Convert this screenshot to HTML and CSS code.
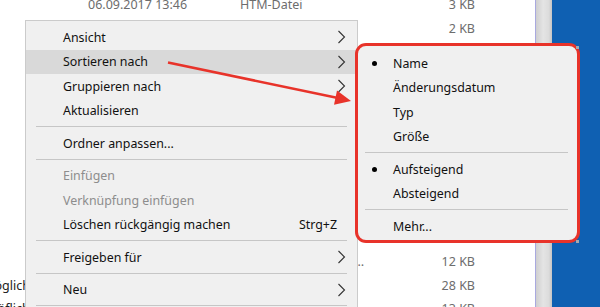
FILE: index.html
```html
<!DOCTYPE html>
<html lang="de">
<head>
  <meta charset="UTF-8">
  <title>Kontextmenü - Sortieren nach</title>
  <link rel="stylesheet" href="styles.css">
</head>
<body>
  <div class="screen">
    <!-- Dateiliste im Hintergrund -->
    <div class="files">
      <div class="file-row">
        <span class="col-name">a.htm</span>
        <span class="col-date">06.09.2017 13:46</span>
        <span class="col-type">HTM-Datei</span>
        <span class="col-size">3 KB</span>
      </div>
      <div class="file-row">
        <span class="col-name">b.htm</span>
        <span class="col-date">06.09.2017 13:46</span>
        <span class="col-type">HTM-Datei</span>
        <span class="col-size">2 KB</span>
      </div>
      <div class="file-row"><span class="col-name"></span></div>
      <div class="file-row"><span class="col-name"></span></div>
      <div class="file-row"><span class="col-name"></span></div>
      <div class="file-row"><span class="col-name"></span></div>
      <div class="file-row"><span class="col-name"></span></div>
      <div class="file-row"><span class="col-name"></span></div>
      <div class="file-row"><span class="col-name"></span></div>
      <div class="file-row"><span class="col-name"></span></div>
      <div class="file-row"><span class="col-name"></span></div>
      <div class="file-row">
        <span class="col-name">c.pdf</span>
        <span class="col-date">12.06.2017 09:12</span>
        <span class="col-type">Adobe Acrobat-Dok…</span>
        <span class="col-size">12 KB</span>
      </div>
      <div class="file-row">
        <span class="col-name dark">Zugriff möglich.txt</span>
        <span class="col-date">14.06.2017 11:30</span>
        <span class="col-type">Textdokument</span>
        <span class="col-size">28 KB</span>
      </div>
      <div class="file-row">
        <span class="col-name dark">Anfrage höflich.txt</span>
        <span class="col-date">14.06.2017 11:32</span>
        <span class="col-type">Textdokument</span>
        <span class="col-size">13 KB</span>
      </div>
    </div>
    <div class="scrollbar"></div>
    <div class="desktop"></div>
  </div>

  <!-- Kontextmenü -->
  <ul class="menu">
    <li class="item">Ansicht<svg class="chevron" viewBox="0 0 9 14"><path d="M1.5 1 L7.5 7 L1.5 13"/></svg></li>
    <li class="item active">Sortieren nach<svg class="chevron" viewBox="0 0 9 14"><path d="M1.5 1 L7.5 7 L1.5 13"/></svg></li>
    <li class="item">Gruppieren nach<svg class="chevron" viewBox="0 0 9 14"><path d="M1.5 1 L7.5 7 L1.5 13"/></svg></li>
    <li class="item">Aktualisieren</li>
    <li class="sep"></li>
    <li class="item">Ordner anpassen...</li>
    <li class="sep"></li>
    <li class="item disabled">Einfügen</li>
    <li class="item disabled">Verknüpfung einfügen</li>
    <li class="item">Löschen rückgängig machen<span class="shortcut">Strg+Z</span></li>
    <li class="sep"></li>
    <li class="item">Freigeben für<svg class="chevron" viewBox="0 0 9 14"><path d="M1.5 1 L7.5 7 L1.5 13"/></svg></li>
    <li class="sep"></li>
    <li class="item">Neu<svg class="chevron" viewBox="0 0 9 14"><path d="M1.5 1 L7.5 7 L1.5 13"/></svg></li>
    <li class="sep"></li>
  </ul>

  <!-- Untermenü (rot markiert) -->
  <ul class="submenu">
    <li class="sub-item checked">Name</li>
    <li class="sub-item">Änderungsdatum</li>
    <li class="sub-item">Typ</li>
    <li class="sub-item">Größe</li>
    <li class="sub-sep"></li>
    <li class="sub-item checked">Aufsteigend</li>
    <li class="sub-item">Absteigend</li>
    <li class="sub-sep"></li>
    <li class="sub-item">Mehr...</li>
  </ul>

  <!-- Pfeil -->
  <svg class="arrow" viewBox="0 0 600 307">
    <line x1="168" y1="62.5" x2="338" y2="98"/>
    <polygon points="351,101 334,104.8 337,90.6"/>
  </svg>
</body>
</html>
```

FILE: styles.css
```css
body {
  margin: 0;
  width: 600px;
  height: 307px;
  overflow: hidden;
  position: relative;
  font-family: "Noto Sans", "Open Sans", sans-serif;
  background: #fff;
}
.screen {
  display: flex;
  height: 307px;
}
.files {
  width: 535px;
  flex-shrink: 0;
  overflow: hidden;
  margin-top: -7px;
  font-size: 12.5px;
  color: #6d6d6d;
}
.file-row {
  display: flex;
  height: 23.4px;
  align-items: center;
  white-space: nowrap;
}
.col-name {
  width: 148px;
  margin-left: -60px;
  flex-shrink: 0;
  overflow: hidden;
}
.col-name.dark {
  color: #222;
}
.col-date {
  width: 152px;
  flex-shrink: 0;
}
.col-type {
  width: 128px;
  flex-shrink: 0;
  overflow: hidden;
  text-overflow: ellipsis;
}
.col-size {
  width: 107px;
  text-align: right;
  flex-shrink: 0;
}
.scrollbar {
  width: 16px;
  flex-shrink: 0;
  border-left: 1px solid #a9a9df;
  background: linear-gradient(to right, #cfcfcf, #e4e4e4 45%, #dcdcdc 80%, #c4c4c4);
}
.desktop {
  flex: 1;
  background: #0f60b2;
}

/* Kontextmenü */
.menu {
  position: absolute;
  left: 25px;
  top: 20px;
  width: 331px;
  margin: 0;
  padding: 4px 0;
  list-style: none;
  background: #f0f0f0;
  border: 1px solid #cbcbcb;
  font-size: 12.4px;
  color: #111;
}
.item {
  display: flex;
  align-items: center;
  height: 24.5px;
  padding-left: 37px;
  padding-right: 11px;
}
.item.active {
  background: #d9d9d9;
}
.item.disabled {
  color: #8d8d8d;
}
.chevron {
  width: 9px;
  height: 14px;
  margin-left: auto;
}
.chevron path {
  fill: none;
  stroke: #333;
  stroke-width: 1.1;
}
.shortcut {
  margin-left: auto;
  margin-right: 9px;
}
.sep {
  height: 8px;
  margin: 0 10px;
  box-sizing: border-box;
  padding-top: 3px;
}
.sep::after {
  content: "";
  display: block;
  height: 1px;
  background: #c6c6c6;
}

/* Untermenü */
.submenu {
  position: absolute;
  left: 355px;
  top: 43px;
  width: 219px;
  margin: 0;
  padding: 4.75px 0 1.5px;
  list-style: none;
  background: #f0f0f0;
  border: 3px solid #e8332a;
  border-radius: 11px;
  font-size: 12.4px;
  color: #111;
}
.submenu::after {
  content: "";
  position: absolute;
  right: -2px;
  top: 0;
  width: 3px;
  height: 3px;
  background: #a4a9b0;
  box-shadow: 0 194px 0 #a4a9b0;
}
.sub-item {
  display: flex;
  align-items: center;
  height: 24.5px;
  padding-left: 35px;
  position: relative;
}
.sub-item.checked::before {
  content: "";
  position: absolute;
  left: 14px;
  top: 10px;
  width: 5px;
  height: 5px;
  border-radius: 50%;
  background: #000;
}
.sub-sep {
  height: 8px;
  margin: 0 9px 0 7px;
  box-sizing: border-box;
  padding-top: 3px;
}
.sub-sep::after {
  content: "";
  display: block;
  height: 1px;
  background: #c6c6c6;
}

/* Pfeil */
.arrow {
  position: absolute;
  left: 0;
  top: 0;
  width: 600px;
  height: 307px;
  pointer-events: none;
}
.arrow line {
  stroke: #e8332a;
  stroke-width: 2.6;
}
.arrow polygon {
  fill: #e8332a;
}
```
